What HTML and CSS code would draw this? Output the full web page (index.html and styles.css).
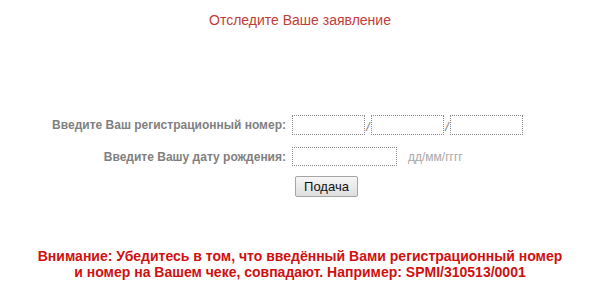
FILE: index.html
```html
<!DOCTYPE html>
<html lang="ru">
<head>
<meta charset="utf-8">
<link rel="stylesheet" href="styles.css">
</head>
<body>
<div class="page">
  <h1 class="title">Отследите Ваше заявление</h1>
  <form class="track">
    <label class="lbl">Введите Ваш регистрационный номер:</label>
    <div class="field">
      <input class="box" type="text"><span class="sep">/</span><input class="box" type="text"><span class="sep">/</span><input class="box" type="text">
    </div>
    <label class="lbl">Введите Вашу дату рождения:</label>
    <div class="field">
      <input class="box date" type="text"><span class="hint">дд/мм/гггг</span>
    </div>
    <span></span>
    <div class="field">
      <button class="submit" type="button">Подача</button>
    </div>
  </form>
  <p class="notice">Внимание: Убедитесь в том, что введённый Вами регистрационный номер<br>и номер на Вашем чеке, совпадают. Например: SPMI/310513/0001</p>
</div>
</body>
</html>
```
FILE: styles.css
```css
html, body {
  margin: 0;
  padding: 0;
  background: #ffffff;
}
.page {
  width: 600px;
  font-family: "Liberation Sans", Arial, sans-serif;
}
.title {
  margin: 0;
  padding-top: 12px;
  font-size: 14px;
  font-weight: normal;
  line-height: 16px;
  color: #c43c36;
  text-align: center;
}
.track {
  display: grid;
  grid-template-columns: 286px auto;
  column-gap: 6px;
  row-gap: 10px;
  align-items: center;
  margin-top: 85px;
}
.lbl {
  text-align: right;
  font-size: 12px;
  font-weight: bold;
  color: #7f7f7f;
}
.field {
  display: flex;
  align-items: center;
}
.box {
  box-sizing: border-box;
  width: 73px;
  height: 20px;
  margin: 0;
  padding: 0 2px;
  border: 1px dotted #8a8a8a;
  background: #fff;
}
.box.date {
  width: 105px;
  height: 19px;
}
.sep {
  width: 6px;
  text-align: center;
  font-size: 12px;
  color: #777;
  font-style: italic;
  line-height: 20px;
  padding-top: 4px;
}
.hint {
  margin-left: 11px;
  font-size: 12px;
  color: #a8a8a8;
}
.submit {
  margin-left: 3px;
  height: 21px;
  width: 63px;
  padding: 0;
  font-family: "Liberation Sans", Arial, sans-serif;
  font-size: 13px;
  color: #111;
  background: linear-gradient(#f6f6f6, #dedede);
  border: 1px solid #a5a5a5;
  border-radius: 2px;
}
.notice {
  margin: 51px 0 0;
  font-size: 14px;
  font-weight: bold;
  line-height: 16px;
  color: #d01010;
  text-align: center;
}
```
